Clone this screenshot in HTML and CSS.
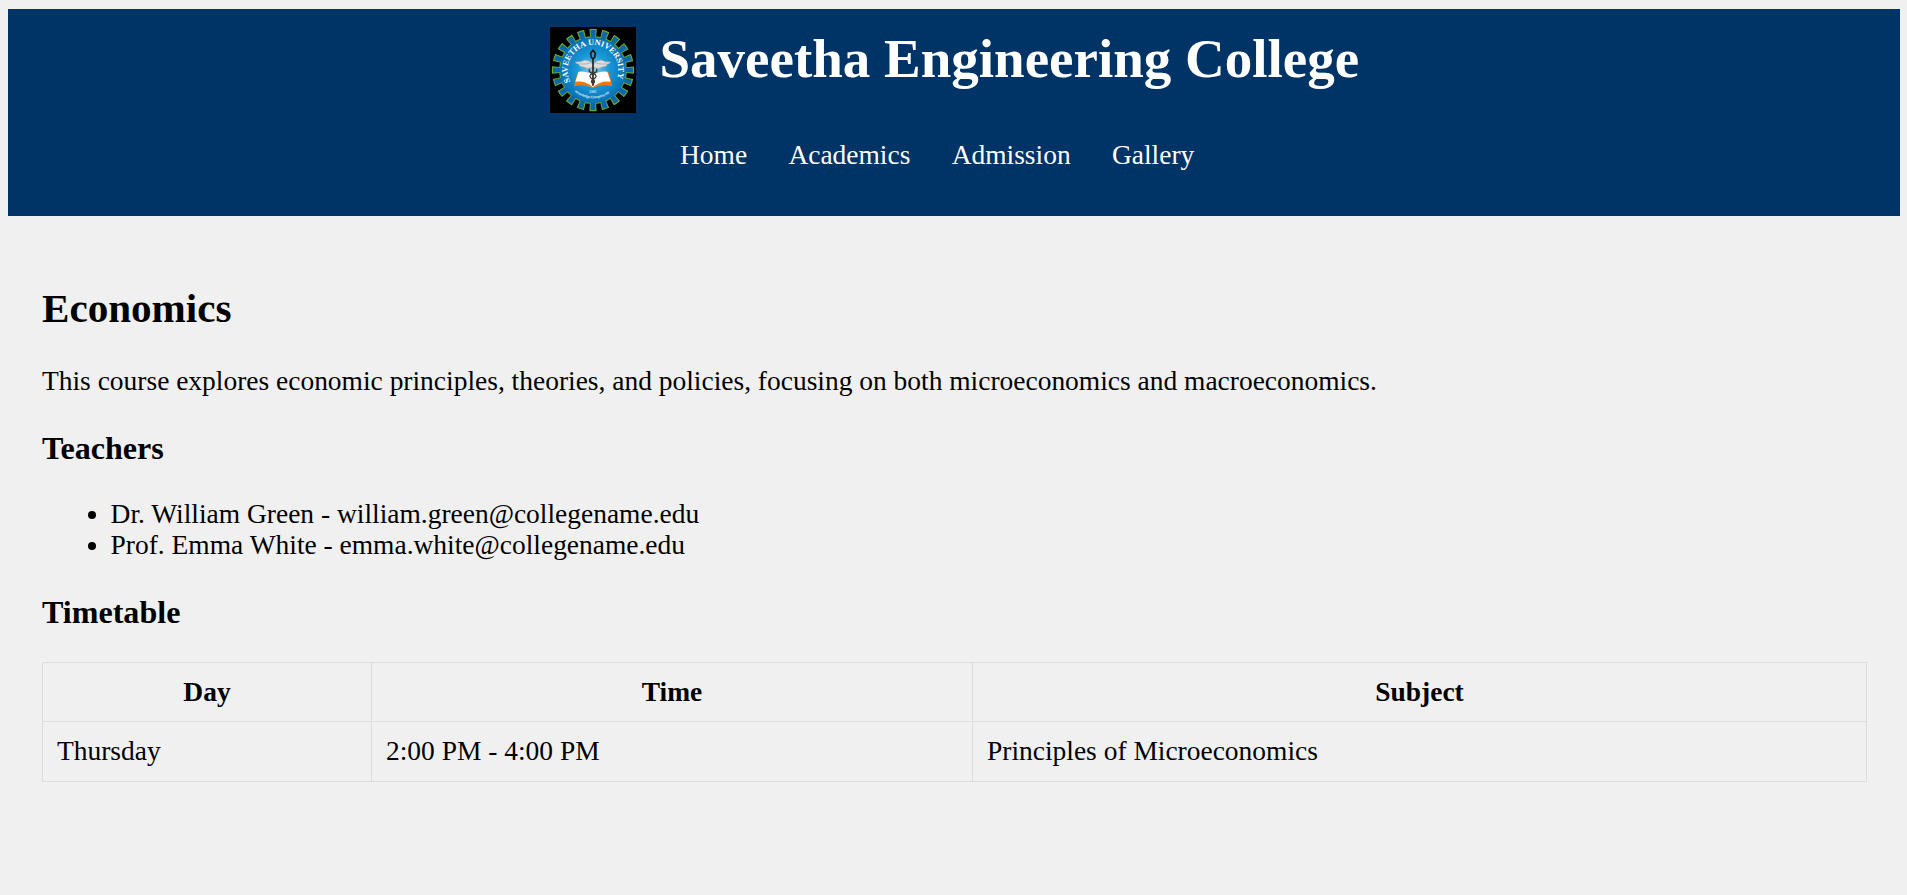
FILE: index.html
```html
<!DOCTYPE html>
<html lang="en">
<head>
<meta charset="utf-8">
<title>Economics - Saveetha Engineering College</title>
<link rel="stylesheet" href="styles.css">
</head>
<body>
<header class="site-header">
  <div class="brand">
    <svg class="logo" viewBox="0 0 258 258" role="img" aria-label="Saveetha University">
      <defs>
        <radialGradient id="face"><stop offset="0" stop-color="#8fd0f0"/><stop offset=".45" stop-color="#1a9cdb"/><stop offset="1" stop-color="#0870b5"/></radialGradient>
        <path id="arc-top" d="M61 164A76 76 0 1 1 197 164"/>
        <path id="arc-low" d="M74 194A86 86 0 0 0 184 194"/>
      </defs>
      <rect width="258" height="258"/>
      <circle cx="129" cy="129" r="111" fill="none" stroke="#6fa52c" stroke-width="25" pathLength="200" stroke-dasharray="5.9 4.1" stroke-dashoffset="2.95"/>
      <circle cx="129" cy="129" r="102" fill="#6fa52c"/>
      <circle cx="129" cy="129" r="108" fill="none" stroke="#0868aa" stroke-width="24" pathLength="200" stroke-dasharray="4.1 5.9" stroke-dashoffset="2.05"/>
      <circle cx="129" cy="129" r="99" fill="url(#face)"/>
      <text class="logo-name" textLength="298" lengthAdjust="spacing"><textPath href="#arc-top">SAVEETHA UNIVERSITY</textPath></text>
      <path d="M82 137L72 178Q105 170 129 183Q153 170 187 178L177 137Q150 131 129 147Q108 131 82 137Z" fill="#e97817"/>
      <path d="M86 134L76 164Q108 160 129 181Q150 160 182 164L172 134Q147 131 129 146Q111 131 86 134Z" fill="#fff"/>
      <path d="M127 121Q112 129 101 120Q88 121 86 112Q77 110 76 105Q93 106 104 99Q119 99 129 111Q139 99 154 99Q165 106 182 105Q181 110 172 112Q170 121 157 120Q146 129 131 121Z" fill="#ddd" stroke="#8d9ca5" stroke-width="2"/>
      <path d="M86 111Q108 113 125 107M172 111Q150 113 133 107" fill="none" stroke="#9aa3a8" stroke-width="2"/>
      <path d="M129 70L136 79L134 91L129 96L124 91L122 79Z" fill="#3c91b8" stroke="#181818" stroke-width="5"/>
      <path d="M129 93V176" stroke="#222" stroke-width="5"/>
      <path d="M119 126C109 139 140 136 138 149C136 158 122 155 125 166L132 172M139 126C149 139 118 136 120 149C122 158 136 155 133 166L126 172" fill="none" stroke="#40382f" stroke-width="4"/>
      <text class="logo-year" x="129" y="197" text-anchor="middle">2005</text>
      <text class="logo-motto" textLength="112"><textPath href="#arc-low">Knowledge Company Ad</textPath></text>
    </svg>
    <h1 class="title">Saveetha Engineering College</h1>
  </div>
  <nav class="nav">
    <a>Home</a><a>Academics</a><a>Admission</a><a>Gallery</a>
  </nav>
</header>
<main class="content">
  <h2>Economics</h2>
  <p>This course explores economic principles, theories, and policies, focusing on both microeconomics and macroeconomics.</p>
  <h3>Teachers</h3>
  <ul>
    <li>Dr. William Green - william.green@collegename.edu</li>
    <li>Prof. Emma White - emma.white@collegename.edu</li>
  </ul>
  <h3 class="timetable-heading">Timetable</h3>
  <table>
    <tr><th>Day</th><th>Time</th><th>Subject</th></tr>
    <tr><td>Thursday</td><td>2:00 PM - 4:00 PM</td><td>Principles of Microeconomics</td></tr>
  </table>
</main>
</body>
</html>
```
FILE: styles.css
```css
body {
  margin: 9px 7px 0 8px;
  background: #f0f0f0;
  color: #000;
  font: 27.46px/31px "Liberation Serif", "Times New Roman", serif;
}
.site-header {
  box-sizing: border-box;
  height: 207px;
  padding-top: 18px;
  background: #003366;
  color: #fff;
}
.brand { display: flex; gap: 23.5px; padding-left: 542px; }
.logo { width: 86px; height: 86px; flex: none; }
.logo-name { font: bold 25px "Liberation Serif", serif; fill: #fff; }
.logo-year { font: bold 11px "Liberation Serif", serif; fill: #c4e4f5; }
.logo-motto { font: bold 11px "Liberation Sans", sans-serif; fill: #c4e4f5; }
.title { margin: 1px 0 0; font-size: 55px; line-height: 62px; white-space: nowrap; }
.nav { display: flex; gap: 41.3px; margin: 27px 0 0 672px; }
.content { padding: 34px 34px; }
h2 { margin: 34px 0; font-size: 41.1px; line-height: 48px; }
p { margin: 27px 0; }
h3 { margin: 33px 0 32px; font-size: 32.1px; line-height: 36px; }
ul { margin: 33px 0 27px; padding-left: 68.6px; }
.timetable-heading { margin-top: 33px; }
table { width: 1825px; border-collapse: collapse; table-layout: fixed; }
th, td { height: 31px; padding: 14px; border: 1px solid #ddd; }
th { padding: 14px 14px 13px; }
td { text-align: left; padding: 14px; }
th:nth-child(1) { width: 300px; }
th:nth-child(2) { width: 572px; }
```
